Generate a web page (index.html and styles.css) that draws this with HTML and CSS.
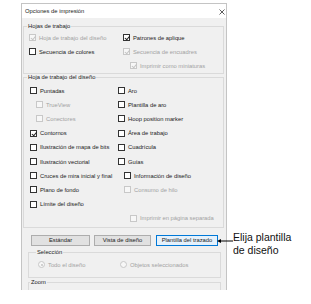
FILE: index.html
```html
<!DOCTYPE html>
<html lang="es">
<head>
<meta charset="utf-8">
<title>Opciones de impresión</title>
<link rel="stylesheet" href="styles.css">
</head>
<body>
<div class="page">
  <div class="dialog">
    <div class="titlebar">
      <span class="title">Opciones de impresión</span>
      <svg class="close" width="6" height="6" viewBox="0 0 6 6"><path d="M0.5 0.5 L5.5 5.5 M5.5 0.5 L0.5 5.5" stroke="#333" stroke-width="0.8" fill="none"/></svg>
    </div>
    <div class="body">
      <fieldset class="group g1">
        <legend>Hojas de trabajo</legend>
        <div class="grid grid1">
          <label class="opt dis"><span class="cb on"></span>Hoja de trabajo del diseño</label>
          <label class="opt"><span class="cb on"></span>Patrones de aplique</label>
          <label class="opt"><span class="cb"></span>Secuencia de colores</label>
          <label class="opt dis"><span class="cb on"></span>Secuencia de encuadres</label>
          <span></span>
          <label class="opt dis ind"><span class="cb on"></span>Imprimir como miniaturas</label>
        </div>
      </fieldset>

      <fieldset class="group g2">
        <legend>Hoja de trabajo del diseño</legend>
        <div class="grid grid2">
          <label class="opt"><span class="cb"></span>Puntadas</label>
          <label class="opt"><span class="cb"></span>Aro</label>
          <label class="opt dis ind"><span class="cb"></span>TrueView</label>
          <label class="opt"><span class="cb"></span>Plantilla de aro</label>
          <label class="opt dis ind"><span class="cb"></span>Conectores</label>
          <label class="opt"><span class="cb"></span>Hoop position marker</label>
          <label class="opt"><span class="cb on"></span>Contornos</label>
          <label class="opt"><span class="cb"></span>Área de trabajo</label>
          <label class="opt"><span class="cb"></span>Ilustración de mapa de bits</label>
          <label class="opt"><span class="cb"></span>Cuadrícula</label>
          <label class="opt"><span class="cb"></span>Ilustración vectorial</label>
          <label class="opt"><span class="cb"></span>Guías</label>
          <label class="opt"><span class="cb"></span>Cruces de mira inicial y final</label>
          <label class="opt ind"><span class="cb"></span>Información de diseño</label>
          <label class="opt"><span class="cb"></span>Plano de fondo</label>
          <label class="opt dis ind"><span class="cb"></span>Consumo de hilo</label>
          <label class="opt"><span class="cb"></span>Límite del diseño</label>
          <span></span>
          <span></span>
          <label class="opt dis ind2"><span class="cb"></span>Imprimir en página separada</label>
        </div>
      </fieldset>

      <div class="buttons">
        <button class="btn b1">Estándar</button>
        <button class="btn b2">Vista de diseño</button>
        <button class="btn b3 focus">Plantilla del trazado</button>
      </div>

      <fieldset class="group g3">
        <legend>Selección</legend>
        <div class="radios">
          <label class="opt dis r1"><span class="rb on"></span>Todo el diseño</label>
          <label class="opt dis"><span class="rb"></span>Objetos seleccionados</label>
        </div>
      </fieldset>

      <fieldset class="group g4">
        <legend>Zoom</legend>
      </fieldset>
    </div>
  </div>

  <div class="callout">
    <svg class="arrow" width="16" height="6" viewBox="0 0 16 6"><path d="M0 3 L4 1 L4 5 Z" fill="#000"/><path d="M3 3 L16 3" stroke="#000" stroke-width="1"/></svg>
    <div class="callout-text">Elija plantilla<br>de diseño</div>
  </div>
</div>
</body>
</html>
```

FILE: styles.css
```css
* { box-sizing: border-box; }
html, body { margin: 0; padding: 0; background: #fff; }
body { font-family: "Liberation Sans", Arial, sans-serif; }

.page {
  position: relative;
  width: 311px;
  height: 304px;
  padding: 3px 0 0 21px;
  overflow: hidden;
}

.dialog {
  width: 206px;
  height: 287px;
  border: 1px solid #c4c4c4;
  border-bottom: none;
  display: flex;
  flex-direction: column;
  overflow: hidden;
  background: #fff;
}

.titlebar {
  height: 14px;
  flex: none;
  display: flex;
  align-items: center;
  justify-content: space-between;
  padding: 0 1px 0 3px;
  background: #fff;
  font-size: 5.8px;
  color: #1a1a1a;
}
.close { display: block; margin-top: 1px; }

.body {
  flex: 1;
  background: #f0f0f0;
  padding: 5px 2px 0 1px;
  font-size: 5.8px;
  color: #1a1a1a;
  overflow: hidden;
}

.group {
  margin: 0;
  padding: 0 0 0 5px;
  border: 1px solid #dadada;
  min-width: 0;
}
.group legend {
  padding: 0 1px;
  margin-left: -2px;
  line-height: 7px;
  font-size: 5.8px;
  color: #1a1a1a;
}

.grid { display: grid; }
.grid1 {
  grid-template-columns: 94px 1fr;
  grid-auto-rows: 14px;
  padding-top: 0.5px;
}
.grid2 {
  grid-template-columns: 88px 1fr;
  grid-auto-rows: 14.2px;
  padding: 3px 0 2px 1px;
}

.opt {
  display: flex;
  align-items: center;
  gap: 3px;
  white-space: nowrap;
  line-height: 8px;
}
.opt.dis { color: #a2a2a2; }
.opt.ind { padding-left: 6px; }
.opt.ind2 { padding-left: 12px; }
.grid1 .opt.ind { padding-left: 7px; }

.cb {
  flex: none;
  width: 7px;
  height: 7px;
  border: 1px solid #333;
  background: #fff;
  position: relative;
}
.dis .cb { border-color: #c8c8c8; background: #f7f7f7; }
.cb.on::after {
  content: "";
  position: absolute;
  left: 1.5px;
  top: 0px;
  width: 2px;
  height: 3.5px;
  border-right: 0.9px solid #222;
  border-bottom: 0.9px solid #222;
  transform: rotate(40deg);
}
.dis .cb.on::after { border-color: #c4c4c4; }

.buttons {
  display: flex;
  padding: 7px 0 0 8px;
  gap: 4px;
}
.btn {
  height: 11px;
  padding: 0;
  border: 1px solid #adadad;
  background: #e1e1e1;
  font-family: "Liberation Sans", Arial, sans-serif;
  font-size: 5.8px;
  color: #1a1a1a;
  line-height: 9px;
}
.b1 { width: 59px; }
.b2 { width: 57px; }
.b3 { width: 62px; margin-left: 1px; }
.btn.focus { border-color: #0078d7; background: #e5f1fb; }

.g3 {
  margin: 3px 3px 0 5px;
  padding-left: 9px;
  height: 29px;
}
.radios {
  display: flex;
  padding-top: 4.5px;
}
.radios .r1 { width: 82px; }
.rb {
  flex: none;
  width: 7px;
  height: 7px;
  border-radius: 50%;
  border: 1px solid #c8c8c8;
  background: #f7f7f7;
  position: relative;
}
.rb.on::after {
  content: "";
  position: absolute;
  left: 1.5px;
  top: 1.5px;
  width: 2px;
  height: 2px;
  border-radius: 50%;
  background: #c4c4c4;
}

.g4 {
  margin: 1px 3px 0 5px;
  padding-left: 3px;
  height: 30px;
}

.callout {
  position: absolute;
  left: 217px;
  top: 231px;
  display: flex;
  align-items: flex-start;
}
.arrow { display: block; margin-top: 7px; }
.callout-text {
  font-family: "Liberation Sans", Arial, sans-serif;
  font-size: 10.5px;
  line-height: 13px;
  color: #111;
}
```
